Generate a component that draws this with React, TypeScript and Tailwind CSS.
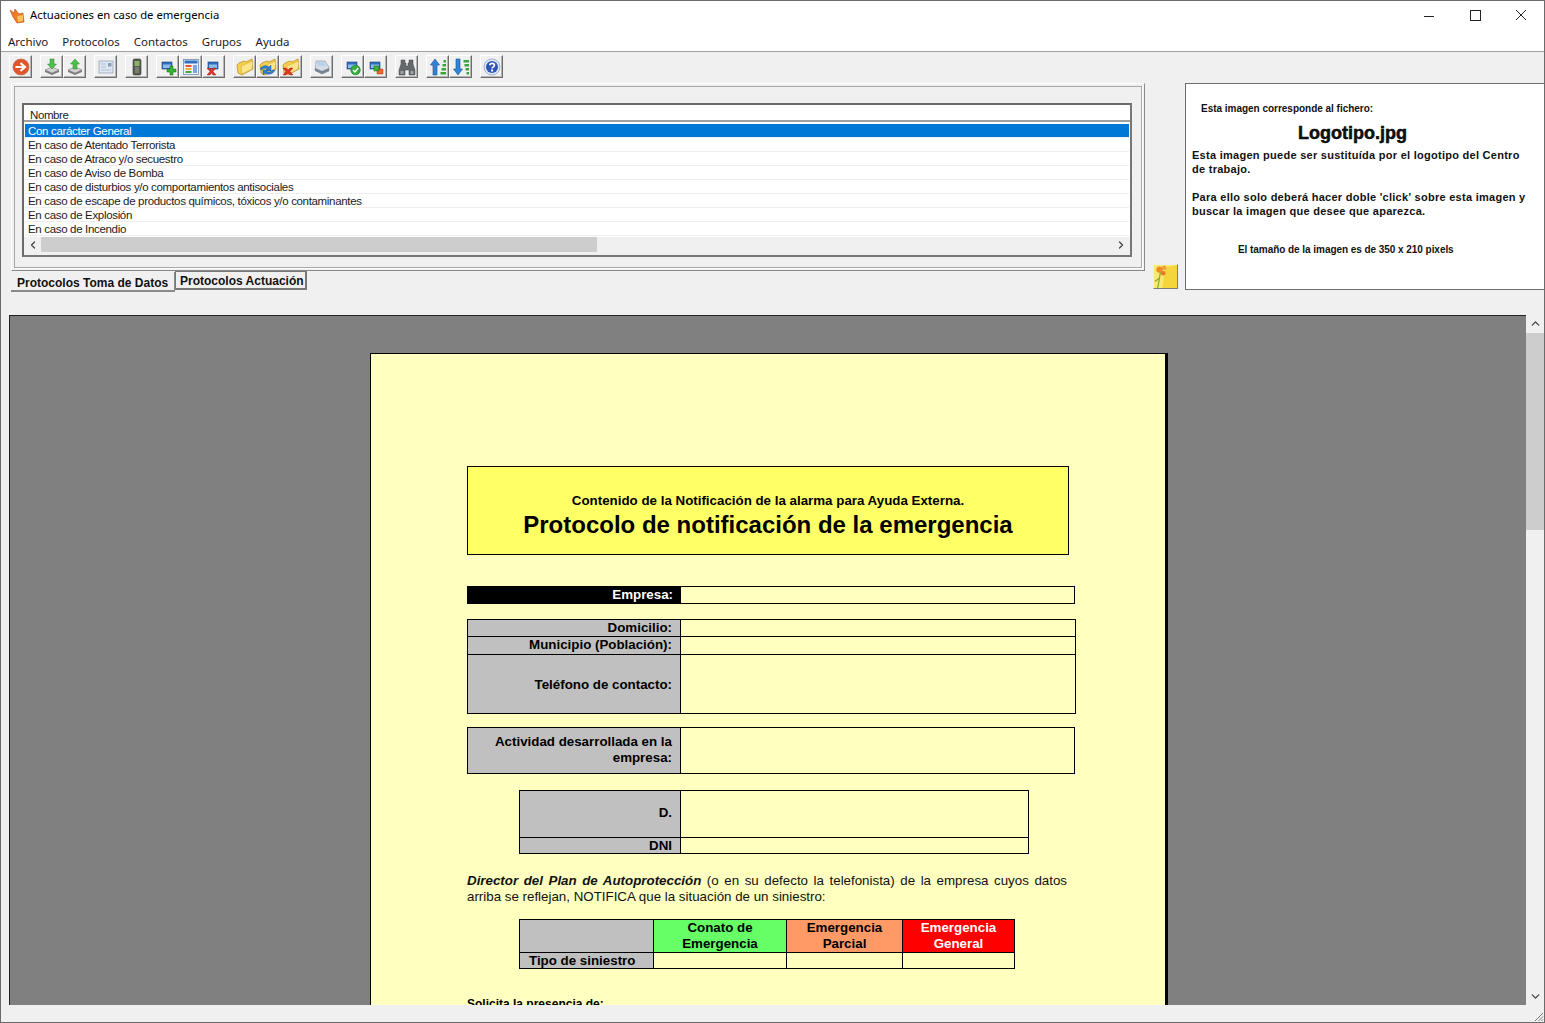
import type { ReactNode } from 'react';
import { ChevronLeft, ChevronRight, ChevronUp, ChevronDown } from 'lucide-react';

const rows = [
  'Con carácter General',
  'En caso de Atentado Terrorista',
  'En caso de Atraco y/o secuestro',
  'En caso de Aviso de Bomba',
  'En caso de disturbios y/o comportamientos antisociales',
  'En caso de escape de productos químicos, tóxicos y/o contaminantes',
  'En caso de Explosión',
  'En caso de Incendio',
];

function Tray({ up }: { up?: boolean }) {
  return (
    <svg viewBox="0 0 18 18" className="w-[18px] h-[18px]">
      <path d="M2 12 L9 9 L16 12 L9 15 Z" fill="#d4d4d4" stroke="#8a8a8a" strokeWidth="0.7" />
      <path d="M2 12 V14 L9 17 L16 14 V12 L9 15 Z" fill="#7d7d7d" />
      {up ? (
        <path d="M9 1 L13.5 6 H11 V11 H7 V6 H4.5 Z" fill="#4cc04c" stroke="#2a8a2a" strokeWidth="0.5" />
      ) : (
        <path d="M7 1 H11 V6 H13.5 L9 11 L4.5 6 H7 Z" fill="#4cc04c" stroke="#2a8a2a" strokeWidth="0.5" />
      )}
    </svg>
  );
}

function Windows({ badge }: { badge: 'plus' | 'x' | 'check' | 'swap' }) {
  return (
    <svg viewBox="0 0 18 18" className="w-[18px] h-[18px]">
      <rect x="3" y="4" width="10" height="7" fill="#2f6fc0" stroke="#1c3f78" strokeWidth="0.6" />
      <rect x="4" y="6.5" width="8" height="3.5" fill="#8fbbe8" />
      {badge === 'plus' && <path d="M11 8 H14 V11 H17 V14 H14 V17 H11 V14 H8 V11 H11 Z" fill="#35b535" stroke="#126212" strokeWidth="0.5" />}
      {badge === 'x' && <path d="M2 10 H5 L6.5 12 L8 10 H11 L8 13.5 L11 17 H8 L6.5 15 L5 17 H2 L5 13.5 Z" fill="#e0342a" stroke="#8a1510" strokeWidth="0.4" />}
      {badge === 'check' && (
        <>
          <circle cx="11.5" cy="12" r="4.8" fill="#2fae3c" stroke="#136a1c" strokeWidth="0.5" />
          <path d="M9 12 L11 14 L14.2 10" fill="none" stroke="#fff" strokeWidth="1.5" />
        </>
      )}
      {badge === 'swap' && (
        <>
          <rect x="7" y="8" width="5" height="5" fill="#37b43a" stroke="#136a1c" strokeWidth="0.5" />
          <path d="M12 11 H16 V16 H10 V13 H12 Z" fill="#ee6a2a" stroke="#963a10" strokeWidth="0.5" />
        </>
      )}
    </svg>
  );
}

function Folder({ badge }: { badge?: 'swap' | 'x' }) {
  return (
    <svg viewBox="0 0 18 18" className="w-[18px] h-[18px]">
      <path d="M1 7 L3 5 L8 3 L10 4 L16 1 L17 11 L6 17 L2 15 Z" fill="#f6cf4e" stroke="#b08820" strokeWidth="0.7" />
      <path d="M5 8 L17 3 L16 11 L6 16 Z" fill="#fde68a" stroke="#c2952c" strokeWidth="0.4" />
      {badge === 'swap' && (
        <>
          <path d="M1 11 C3 7 8 7 10 9 L12 7 V13 H6 L8 11 C6 10 4 10 3 12 Z" fill="#2e7fd4" stroke="#174a86" strokeWidth="0.4" />
          <path d="M16 12 C14 17 8 17 6 15 L4 17 V12 H9 L8 13.5 C10 15 12 14 13.5 12 Z" fill="#2e7fd4" stroke="#174a86" strokeWidth="0.4" />
        </>
      )}
      {badge === 'x' && <path d="M1 10 H4 L6 12 L8 10 H11 L8 13.5 L11 17 H8 L6 15 L4 17 H1 L4 13.5 Z" fill="#e0342a" stroke="#8a1510" strokeWidth="0.4" />}
    </svg>
  );
}

function SortIcon({ up }: { up?: boolean }) {
  return (
    <svg viewBox="0 0 18 18" className="w-[18px] h-[18px]">
      {up ? (
        <path d="M6 1 L10.5 7 H8 V17 H4 V7 H1.5 Z" fill="#2f86d8" stroke="#174a86" strokeWidth="0.6" />
      ) : (
        <path d="M4 1 H8 V11 H10.5 L6 17 L1.5 11 H4 Z" fill="#2f86d8" stroke="#174a86" strokeWidth="0.6" />
      )}
      <g fill="#3aa53a">
        {up ? (
          <>
            <rect x="14.5" y="2" width="2.5" height="2.5" />
            <rect x="13.5" y="6" width="3.5" height="2.5" />
            <rect x="12.5" y="10" width="4.5" height="2.5" />
            <rect x="11.5" y="14" width="5.5" height="2.5" />
          </>
        ) : (
          <>
            <rect x="11.5" y="2" width="5.5" height="2.5" />
            <rect x="12.5" y="6" width="4.5" height="2.5" />
            <rect x="13.5" y="10" width="3.5" height="2.5" />
            <rect x="14.5" y="14" width="2.5" height="2.5" />
          </>
        )}
      </g>
    </svg>
  );
}

const icons: ReactNode[][] = [
  [
    <svg viewBox="0 0 18 18" className="w-[18px] h-[18px]">
      <circle cx="9" cy="9" r="8" fill="#e2552a" stroke="#c0704f" strokeWidth="0.8" />
      <path d="M3.5 9 H12 M8.5 5 L13 9 L8.5 13" fill="none" stroke="#fff" strokeWidth="2.2" />
    </svg>,
  ],
  [<Tray />, <Tray up />],
  [
    <svg viewBox="0 0 18 18" className="w-[18px] h-[18px]">
      <rect x="2" y="3" width="14" height="12" fill="#dde7f3" stroke="#9aa6b6" strokeWidth="0.8" />
      <rect x="11" y="5" width="3.5" height="3.5" fill="#8a9db5" />
      <path d="M4 6 H9 M4 9 H9 M4 12 H14" stroke="#b4c0cf" strokeWidth="1" />
    </svg>,
  ],
  [
    <svg viewBox="0 0 18 18" className="w-[18px] h-[18px]">
      <rect x="5" y="1" width="8" height="16" rx="1.5" fill="#565b50" stroke="#3a3d36" strokeWidth="0.6" />
      <rect x="6.5" y="3" width="5" height="5" fill="#8fae68" />
      <path d="M7 10 H11 M7 12 H11 M7 14 H11" stroke="#9a9f92" strokeWidth="1" />
    </svg>,
  ],
  [
    <Windows badge="plus" />,
    <svg viewBox="0 0 18 18" className="w-[18px] h-[18px]">
      <rect x="1.5" y="1.5" width="15" height="15" fill="#eef3fa" stroke="#6f8cb3" strokeWidth="0.8" />
      <rect x="2.5" y="2.5" width="13" height="3" fill="#2f6fc0" />
      <rect x="3.5" y="7" width="6" height="2" fill="#e8503a" />
      <rect x="3.5" y="10" width="6" height="2" fill="#f0b030" />
      <rect x="3.5" y="13" width="6" height="2" fill="#3fa93f" />
      <rect x="11" y="7" width="4" height="8" fill="#7ba7de" />
    </svg>,
    <Windows badge="x" />,
  ],
  [<Folder />, <Folder badge="swap" />, <Folder badge="x" />],
  [
    <svg viewBox="0 0 18 18" className="w-[18px] h-[18px]">
      <path d="M3 3 H12 L16 9 V13 L9 16 L2 12 Z" fill="#d5dce5" stroke="#8a949f" strokeWidth="0.6" />
      <path d="M2 10 L9 13 L16 10 V13 L9 16 L2 13 Z" fill="#7a838d" />
      <path d="M4 4 H11 L13 8 H5 Z" fill="#b4d4f2" />
    </svg>,
  ],
  [<Windows badge="check" />, <Windows badge="swap" />],
  [
    <svg viewBox="0 0 18 18" className="w-[18px] h-[18px]">
      <path d="M3 2 H7 V5 H8 V8 H10 V5 H11 V2 H15 V6 L17 12 V17 H11 V12 H7 V17 H1 V12 L3 6 Z" fill="#66696b" stroke="#45474a" strokeWidth="0.5" />
      <rect x="2.5" y="13" width="3" height="3" fill="#9da1a4" />
      <rect x="12.5" y="13" width="3" height="3" fill="#9da1a4" />
    </svg>,
  ],
  [<SortIcon up />, <SortIcon />],
  [
    <svg viewBox="0 0 18 18" className="w-[18px] h-[18px]">
      <circle cx="9" cy="9" r="8" fill="#dfe8f6" stroke="#8fa5c8" strokeWidth="0.8" />
      <circle cx="9" cy="9" r="6" fill="#2f55b5" />
      <path d="M6.8 7.2 C7 4.8 11.4 4.8 11.4 7.2 C11.4 8.9 9.1 8.8 9.1 10.6" fill="none" stroke="#fff" strokeWidth="1.7" />
      <rect x="8.1" y="11.5" width="2" height="2" fill="#fff" />
    </svg>,
  ],
];

function ToolButton({ children }: { children: ReactNode }) {
  return (
    <button className="w-[23px] h-[23px] flex items-center justify-center bg-[#f0f0f0] border border-t-[#ffffff] border-l-[#ffffff] border-r-[#6d6d6d] border-b-[#6d6d6d] shadow-[inset_-1px_-1px_0_#b5b5b5]">
      {children}
    </button>
  );
}

function Label({ children, className = '' }: { children: ReactNode; className?: string }) {
  return <div className={`bg-[#c0c0c0] border-r border-black flex items-center justify-end text-right pr-2 font-bold leading-4 ${className}`}>{children}</div>;
}

function FormRow({ label, height, last, nudge = '' }: { label: ReactNode; height: string; last?: boolean; nudge?: string }) {
  return (
    <div className={`flex ${height} ${last ? '' : 'border-b border-black'}`}>
      <Label className={`w-[213px] shrink-0 ${nudge}`}>{label}</Label>
      <div className="flex-1" />
    </div>
  );
}

export default function App() {
  return (
    <div className="w-[1545px] h-[1023px] overflow-hidden flex flex-col bg-[#f0f0f0] border border-[#6b6b6b] font-['Liberation_Sans',sans-serif] text-black">
      {/* title bar */}
      <div className="h-[31px] shrink-0 bg-white flex items-center pl-[8px] pb-[2px] font-['Noto_Sans',sans-serif] text-[11.3px]">
        <svg viewBox="0 0 16 16" className="w-4 h-4">
          <path d="M1 2 L5 5 L6 1 L10 6 L14 5 L15 14 L8 15 L4 9 Z" fill="#ee7b22" stroke="#b8481a" strokeWidth="0.6" />
          <path d="M8 8 L14 7 L14 13 L9 14 Z" fill="#f6c35a" />
        </svg>
        <span className="ml-[5px]">Actuaciones en caso de emergencia</span>
        <div className="ml-auto flex items-center text-[#222]">
          <svg viewBox="0 0 46 30" className="w-[46px] h-[30px]"><path d="M18 15.5 H28" stroke="#222" /></svg>
          <svg viewBox="0 0 46 30" className="w-[46px] h-[30px]"><rect x="18.5" y="9.5" width="10" height="10" fill="none" stroke="#222" /></svg>
          <svg viewBox="0 0 46 30" className="w-[46px] h-[30px]"><path d="M18 9 L28 19 M28 9 L18 19" stroke="#222" /></svg>
        </div>
      </div>
      {/* menu */}
      <div className="h-[19px] shrink-0 bg-white flex items-center pl-[7px] gap-[14px] border-b border-[#a0a0a0] box-content font-['Noto_Sans',sans-serif] text-[11.5px] text-[#1a1a1a]">
        <span>Archivo</span>
        <span>Protocolos</span>
        <span>Contactos</span>
        <span>Grupos</span>
        <span>Ayuda</span>
      </div>
      {/* toolbar */}
      <div className="h-[31px] shrink-0 flex items-start pl-[8px] gap-2 pt-[3px]">
        {icons.map((group, i) => (
          <div key={i} className="flex">
            {group.map((ic, j) => (
              <ToolButton key={j}>{ic}</ToolButton>
            ))}
          </div>
        ))}
      </div>
      {/* top area */}
      <div className="h-[207px] shrink-0 flex">
        <div className="w-[1134px] ml-[10px] flex flex-col">
          <div className="h-[188px] shrink-0 bg-[#f0f0f0] border border-t-[#ffffff] border-l-[#ffffff] border-r-[#8a8a8a] border-b-[#8a8a8a] p-[2px]">
            <div className="h-full border border-[#a8a8a8] shadow-[1px_1px_0_#ffffff] pt-[16px] px-[7px]">
              <div className="w-[1110px] h-[154px] border-2 border-t-[#6a6a6a] border-l-[#6a6a6a] border-r-[#777777] border-b-[#777777] bg-[#f0f0f0] flex flex-col">
                <div className="h-[17px] shrink-0 bg-white border-b-2 border-[#a0a0a0] pl-[6px] text-[11.5px] leading-[20px] tracking-[-0.4px] text-[#222]">Nombre</div>
                <div className="shrink-0 bg-white px-px pt-[2px] pb-px">
                  {rows.map((r, i) => (
                    <div key={r} className={`h-[14px] pl-[3px] text-[11.5px] leading-[15px] tracking-[-0.33px] border-b border-[#eeeeee] ${i === 0 ? 'bg-[#0078d7] text-white' : 'text-[#1b1b1b]'}`}>
                      {r}
                    </div>
                  ))}
                </div>
                <div className="h-[15px] shrink-0 flex items-center pl-px pr-[1px]">
                  <ChevronLeft className="w-[16px] h-[12px] text-[#444] shrink-0" strokeWidth={2.5} />
                  <div className="w-[556px] h-full bg-[#cdcdcd]" />
                  <ChevronRight className="w-[16px] h-[12px] text-[#444] ml-auto shrink-0" strokeWidth={2.5} />
                </div>
              </div>
            </div>
          </div>
          <div className="flex items-start font-bold text-[12px] whitespace-nowrap">
            <div className="w-[164px] h-[20px] mt-[1px] border-b-2 border-r border-[#8a8a8a] pl-[6px] leading-[22px] text-[#111]">Protocolos Toma de Datos</div>
            <div className="w-[132px] h-[19px] border border-r-2 border-b-2 border-[#777777] pl-[4px] leading-[18px] text-[#111]">Protocolos Actuación</div>
          </div>
        </div>
        <div className="ml-[8px] self-start mt-[181px] w-[25px] h-[25px] border border-t-[#eeeeee] border-l-[#eeeeee] border-r-[#7d7d7d] border-b-[#7d7d7d]">
          <svg viewBox="0 0 25 25" className="w-full h-full">
            <path d="M0 0 H25 V25 H0 Z" fill="#fbe873" />
            <path d="M12 3 L25 0 V25 H9 Z" fill="#f5d53c" />
            <circle cx="6" cy="5" r="3.5" fill="#ee8a2a" />
            <circle cx="11" cy="3" r="2.5" fill="#f1a13a" />
            <circle cx="10" cy="9" r="2.5" fill="#e9772a" />
            <path d="M7 8 L4 25 M6 14 L1 18" stroke="#8fa83a" strokeWidth="1.4" fill="none" />
          </svg>
        </div>
        <div className="ml-[7px] flex-1 h-[207px] bg-white border border-r-0 border-[#6f6f6f] font-bold text-[#111] flex flex-col">
          <div className="ml-[15px] mt-[18px] text-[10px] leading-[14px] tracking-[-0.02px]">Esta imagen corresponde al fichero:</div>
          <div className="ml-[112px] mt-[6px] text-[18px] leading-[22px] font-bold [-webkit-text-stroke:0.5px_#000]">Logotipo.jpg</div>
          <div className="ml-[6px] mt-[4px] mr-[8px] text-[11px] leading-[14px] tracking-[0.27px]">
            <p>Esta imagen puede ser sustituída por el logotipo del Centro de trabajo.</p>
            <p className="mt-[14px]">Para ello solo deberá hacer doble 'click' sobre esta imagen y buscar la imagen que desee que aparezca.</p>
          </div>
          <div className="ml-[52px] mt-[25px] text-[10px] leading-[14px] tracking-[-0.05px]">El tamaño de la imagen es de 350 x 210 pixels</div>
        </div>
      </div>
      {/* document view */}
      <div className="h-[690px] mt-[25px] shrink-0 flex ml-[8px]">
        <div className="w-[1518px] h-full bg-[#808080] border-t border-l border-[#222222] overflow-hidden pt-[37px] pl-[360px]">
          <div className="w-[798px] h-[800px] bg-[#ffffbf] border-t border-l border-black border-r-[3px] border-r-black pl-[96px] pt-[112px] text-[13.33px] leading-4">
            <div className="w-[602px] h-[89px] bg-[#ffff66] border border-black flex flex-col items-center pt-[26px]">
              <div className="font-bold">Contenido de la Notificación de la alarma para Ayuda Externa.</div>
              <div className="font-bold text-[24px] leading-[32px]">Protocolo de notificación de la emergencia</div>
            </div>
            <div className="w-[608px] h-[18px] mt-[31px] flex border border-black">
              <div className="w-[213px] shrink-0 bg-black text-white font-bold flex items-center justify-end pr-2 pb-px">Empresa:</div>
              <div className="flex-1" />
            </div>
            <div className="w-[609px] mt-[15px] border border-black">
              <FormRow label="Domicilio:" height="h-[17px]" />
              <FormRow label="Municipio (Población):" height="h-[18px]" nudge="pb-px" />
              <FormRow label="Teléfono de contacto:" height="h-[58px]" last nudge="pt-[2px]" />
            </div>
            <div className="w-[608px] mt-[13px] border border-black">
              <FormRow label={<>Actividad desarrollada en la<br />empresa:</>} height="h-[45px]" last nudge="pb-[1px]" />
            </div>
            <div className="w-[510px] ml-[52px] mt-[16px] border border-black">
              <div className="flex h-[47px] border-b border-black">
                <Label className="w-[161px] shrink-0 pb-[2px]">D.</Label>
                <div className="flex-1" />
              </div>
              <div className="flex h-[15px]">
                <Label className="w-[161px] shrink-0">DNI</Label>
                <div className="flex-1" />
              </div>
            </div>
            <p className="w-[600px] mt-[19px] text-justify text-[#111]">
              <b><i>Director del Plan de Autoprotección</i></b> (o en su defecto la telefonista) de la empresa cuyos datos arriba se reflejan, NOTIFICA que la situación de un siniestro:
            </p>
            <div className="w-[496px] ml-[52px] mt-[14px] border border-black grid grid-cols-[134px_133px_116px_1fr] font-bold text-center">
              <div className="h-[33px] bg-[#c0c0c0] border-r border-b border-black" />
              <div className="h-[33px] bg-[#66ff66] border-r border-b border-black">Conato de<br />Emergencia</div>
              <div className="h-[33px] bg-[#ff9966] border-r border-b border-black">Emergencia<br />Parcial</div>
              <div className="h-[33px] bg-[#ff0000] border-b border-black text-white">Emergencia<br />General</div>
              <div className="h-[15px] bg-[#c0c0c0] border-r border-black text-left pl-[9px] leading-[15px]">Tipo de siniestro</div>
              <div className="h-[15px] border-r border-black" />
              <div className="h-[15px] border-r border-black" />
              <div className="h-[15px]" />
            </div>
            <div className="mt-[27px] font-bold text-[12px]">Solicita la presencia de:</div>
          </div>
        </div>
        <div className="w-[18px] h-full bg-[#f0f0f0] flex flex-col items-center">
          <ChevronUp className="w-[13px] h-[17px] text-[#444] shrink-0" strokeWidth={2.5} />
          <div className="w-full h-[197px] bg-[#cdcdcd] mt-px" />
          <ChevronDown className="w-[13px] h-[17px] text-[#444] shrink-0 mt-auto" strokeWidth={2.5} />
        </div>
      </div>
      {/* status bar */}
      <div className="flex-1 flex items-end justify-end">
        <svg viewBox="0 0 12 12" className="w-3 h-3">
          <path d="M11 3 L3 11 M11 6.5 L6.5 11 M11 9.5 L9.5 11" stroke="#777" strokeWidth="1" />
        </svg>
      </div>
    </div>
  );
}
